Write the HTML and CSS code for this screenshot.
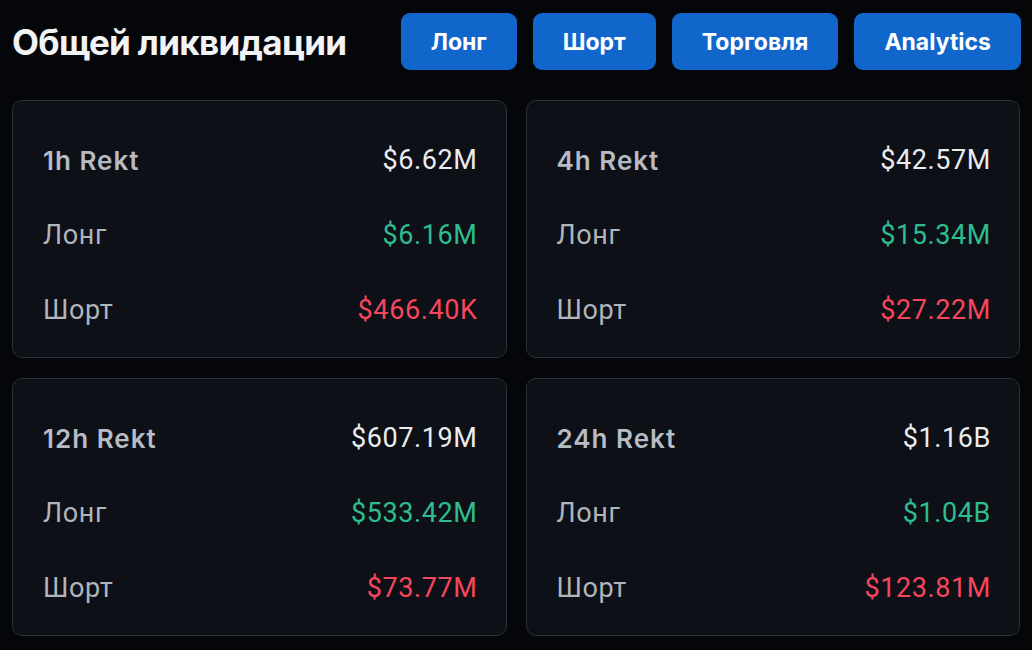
FILE: index.html
```html
<!DOCTYPE html>
<html lang="ru">
<head>
    <meta charset="UTF-8">
    <meta name="viewport" content="width=device-width, initial-scale=1.0">
    <title>Общей ликвидации</title>
    <link rel="stylesheet" href="styles.css">
</head>
<body>
    <div class="header">
        <h1>Общей ликвидации</h1>
        <div class="tabs">
            <button>Лонг</button>
            <button>Шорт</button>
            <button>Торговля</button>
            <button>Analytics</button>
        </div>
    </div>

    <div class="grid">
        <div class="card">
            <div class="row head"><span class="label">1h Rekt</span><span class="value">$6.62M</span></div>
            <div class="row"><span class="label">Лонг</span><span class="value long">$6.16M</span></div>
            <div class="row"><span class="label">Шорт</span><span class="value short">$466.40K</span></div>
        </div>
        <div class="card">
            <div class="row head"><span class="label">4h Rekt</span><span class="value">$42.57M</span></div>
            <div class="row"><span class="label">Лонг</span><span class="value long">$15.34M</span></div>
            <div class="row"><span class="label">Шорт</span><span class="value short">$27.22M</span></div>
        </div>
        <div class="card">
            <div class="row head"><span class="label">12h Rekt</span><span class="value">$607.19M</span></div>
            <div class="row"><span class="label">Лонг</span><span class="value long">$533.42M</span></div>
            <div class="row"><span class="label">Шорт</span><span class="value short">$73.77M</span></div>
        </div>
        <div class="card">
            <div class="row head"><span class="label">24h Rekt</span><span class="value">$1.16B</span></div>
            <div class="row"><span class="label">Лонг</span><span class="value long">$1.04B</span></div>
            <div class="row"><span class="label">Шорт</span><span class="value short">$123.81M</span></div>
        </div>
    </div>
</body>
</html>
```

FILE: styles.css
```css
body {
    margin: 0;
    padding: 13px 11px 14px 12px;
    background: #050609;
    font-family: Inter, 'Noto Sans', sans-serif;
    color: #eaecef;
    box-sizing: border-box;
    height: 650px;
}
.header {
    display: flex;
    align-items: center;
    justify-content: space-between;
    height: 57px;
    margin-bottom: 30px;
}
h1 {
    margin: 0;
    font-size: 35px;
    font-weight: 700;
    letter-spacing: -0.7px;
    color: #f2f3f5;
}
.tabs {
    display: flex;
    gap: 16px;
}
.tabs button {
    height: 57px;
    padding: 0 30px;
    background: #1166cc;
    color: #fff;
    border: none;
    border-radius: 9px;
    font-family: Inter, 'Noto Sans', sans-serif;
    font-size: 23px;
    font-weight: 700;
    cursor: pointer;
}
.grid {
    display: grid;
    grid-template-columns: 1fr 1fr;
    grid-template-rows: 258px 258px;
    gap: 20px 19px;
    margin-right: 1px;
}
.card {
    background: #0d1016;
    border: 1px solid #2b2f37;
    border-radius: 10px;
    padding: 22px 28px 10px 30px;
    display: flex;
    flex-direction: column;
}
.row {
    flex: 1;
    display: flex;
    align-items: center;
    justify-content: space-between;
    font-family: Roboto, 'Noto Sans', sans-serif;
    font-size: 27px;
    letter-spacing: 0.6px;
}
.label { color: #b0b5bd; }
.head .label {
    font-family: Inter, 'Noto Sans', sans-serif;
    font-weight: 600;
    font-size: 26px;
    letter-spacing: 1px;
    color: #b7bcc4;
}
.value { color: #eaecef; }
.value.long { color: #2ebd8f; }
.value.short { color: #f6465d; }
```
